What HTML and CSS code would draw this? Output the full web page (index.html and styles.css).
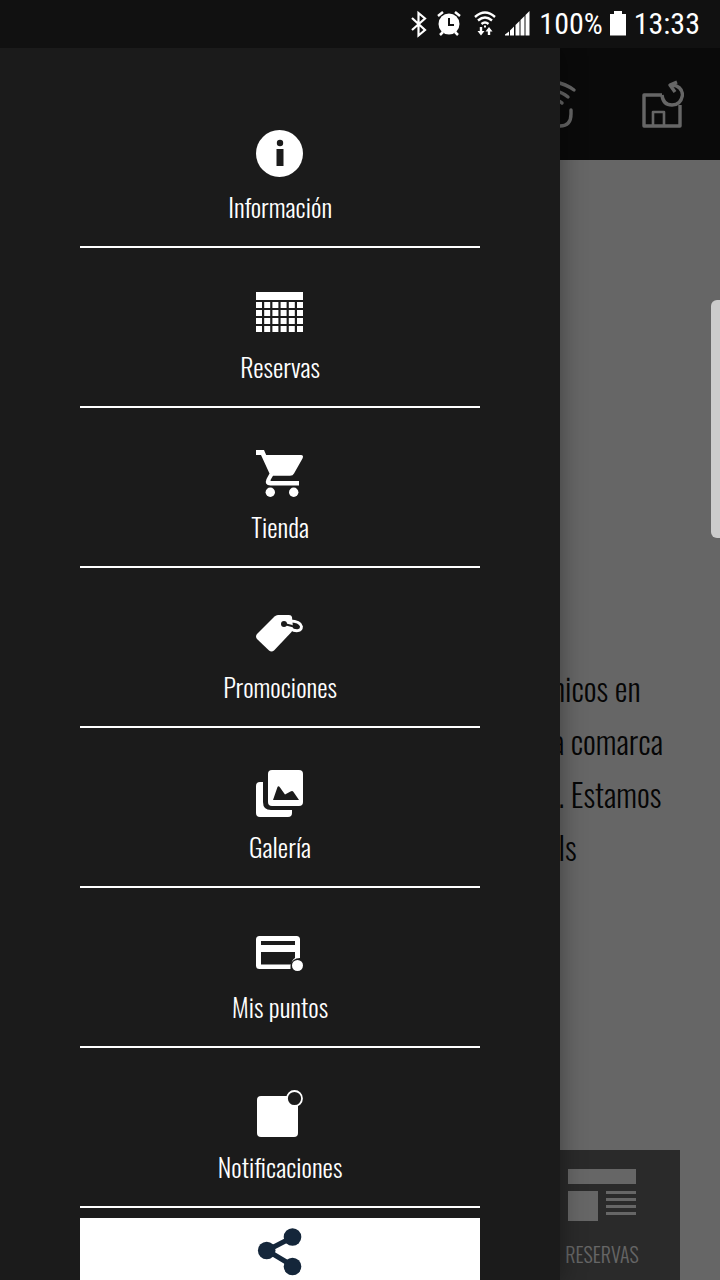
FILE: index.html
```html
<!DOCTYPE html>
<html lang="es">
<head>
  <meta charset="UTF-8">
  <meta name="viewport" content="width=device-width, initial-scale=1">
  <title>Menú</title>
  <link rel="stylesheet" href="styles.css">
</head>
<body>
  <div class="statusbar">
    <svg class="st-bt" width="18" height="28" viewBox="0 0 18 28" fill="none" stroke="#fff" stroke-width="2.200"><path d="M2 8l13 12-6.500 5.500V3l6.500 5.500L2 20"/></svg>
    <svg class="st-alarm" width="24" height="28" viewBox="0 0 24 28"><circle cx="12" cy="14" r="10.500" fill="#fff"/><path d="M1 6l5-4M23 6l-5-4M6 22l-3 3M18 22l3 3" stroke="#fff" stroke-width="2.500"/><path d="M12 8v7h5" fill="none" stroke="#111" stroke-width="2"/></svg>
    <svg class="st-wifi" width="22" height="28" viewBox="0 0 22 28" fill="none" stroke="#fff" stroke-width="2.400"><path d="M1 7q10-9 20 0M4 10.500q7-6 14 0M7.500 14q3.500-3 7 0"/><path d="M10 15.500h2v2h-2z" fill="#fff" stroke="none"/><path d="M7 17v6M15 25v-6" stroke-width="2.400"/><path d="M3.500 21h7L7 25.500zM11.500 21.500h7L15 17z" fill="#fff" stroke="none"/></svg>
    <svg class="st-signal" width="25" height="28" viewBox="0 0 25 28" fill="#fff"><path d="M0 25.500v-1l4-3v4zM5 25.500v-5l4-4v9zM10.500 25.500V15l4-4v14.500zM15.500 25.500V10l4-4v19.500zM20.500 25.500V5l4-4v24.500z"/></svg>
    <span class="st-text">100%</span>
    <svg class="st-battery" width="16" height="28" viewBox="0 0 16 28"><path d="M4 1h8v3h4v21.500H0V4h4z" fill="#fff"/></svg>
    <span class="st-text">13:33</span>
  </div>

  <div class="screen">
    <header class="topbar">
      <button class="icon-btn" aria-label="NFC">
        <svg width="48" height="48" viewBox="0 0 48 48" fill="none" stroke="#fff" stroke-width="3.400" stroke-linecap="round"><path d="M25 2q11 2 19 8M25 11q7 1 13 6M27 20q3 1 5 3M41 30v4q0 12-11 12H14"/></svg>
      </button>
      <button class="icon-btn" aria-label="Volver a la tienda">
        <svg width="42" height="48" viewBox="0 0 42 48" fill="none" stroke="#fff" stroke-width="3.400" stroke-linejoin="round"><path d="M20 15H2v31h36V25"/><path d="M11 46V32h11v14" stroke-width="2.600"/><path d="M20 15q1 10 10 10t10.500-10Q40 6 30 5"/><path d="M35 2l-7 3 5 7"/></svg>
      </button>
    </header>
    <main class="content">
      <p class="intro">nicos en<br>a comarca<br>&nbsp;. Estamos<br>&nbsp;ls</p>
      <a class="tile" href="#reservas">
        <svg width="68" height="52" viewBox="0 0 68 52" fill="#fff"><path d="M0 0h68v15H0zM0 22h30v30H0zM38 22h30v3H38zM38 29h30v3H38zM38 36h30v3H38zM38 43h30v3H38z"/></svg>
        <span>RESERVAS</span>
      </a>
    </main>
    <div class="scrim"></div>
    <div class="edge-handle"></div>

    <nav class="drawer">
      <a class="item" href="#informacion">
        <svg width="48" height="48" viewBox="0 0 48 48"><circle cx="23.500" cy="23.500" r="23.500" fill="#fff"/><circle cx="24" cy="13" r="3.200" fill="#1b1b1b"/><path d="M20.500 19h7v17h-7z" fill="#1b1b1b"/></svg>
        <span>Información</span>
      </a>
      <a class="item" href="#reservas">
        <svg width="48" height="48" viewBox="0 0 48 48" fill="#fff"><path d="M0 2h47v8H0z"/><path d="M0 15h47M0 23h47M0 31h47M0 39h47" stroke="#fff" stroke-width="6" stroke-dasharray="6 2.200"/></svg>
        <span>Reservas</span>
      </a>
      <a class="item" href="#tienda">
        <svg width="48" height="48" viewBox="0 0 48 48" fill="#fff"><path d="M0 0h8l2.200 5H45q3 0 1.500 3.500L38 23.500q-1 2.300-4 2.300H17l-2.500 4.200q-.3 1 .7 1H43v4.500H14.500q-6.500-.5-4-6.500l3-5.500L5 5H0z"/><circle cx="14.300" cy="42.300" r="4.700"/><circle cx="37.700" cy="42.300" r="4.700"/></svg>
        <span>Tienda</span>
      </a>
      <a class="item" href="#promociones">
        <svg width="48" height="48" viewBox="0 0 48 48"><path d="M18.500 6.500Q20 5 22 5h11q2.500 0 3 2l1 11q0 2-1.500 4L18 40.500q-2.500 2-5 0L1 29q-2-2.500 0-5z" fill="#fff"/><path d="M34 11q10 0 11.500 5.500c0 5-6 5.500-11 2" fill="none" stroke="#fff" stroke-width="2.800"/><path d="M28 14l8 2q3 2 6 2" fill="none" stroke="#1b1b1b" stroke-width="2"/><circle cx="28" cy="14" r="3" fill="#1b1b1b"/></svg>
        <span>Promociones</span>
      </a>
      <a class="item" href="#galeria">
        <svg width="48" height="48" viewBox="0 0 48 48"><path d="M4 12h3v20q0 8 8 8h21v3q0 4-4 4H4q-4 0-4-4V16q0-4 4-4z" fill="#fff"/><rect x="12" y="0" width="35" height="36" rx="4" fill="#fff"/><path d="M17 30l4.500-13q1-1.500 2.500.5l5 7 5.500-3q2-1 3 .5L43 30z" fill="#1b1b1b"/></svg>
        <span>Galería</span>
      </a>
      <a class="item" href="#puntos">
        <svg width="48" height="48" viewBox="0 0 48 48" fill="#fff"><path fill-rule="evenodd" d="M3.500 6h37q3.500 0 3.500 3.500V28q-8 0-9.500 7.500V39h-31Q0 39 0 35.500v-26Q0 6 3.500 6zM5 11v4h34v-4zM5 22v12.500h30q1-5 4-6.500v-6z"/><circle cx="41.500" cy="35.500" r="5.500"/></svg>
        <span>Mis puntos</span>
      </a>
      <a class="item" href="#notificaciones">
        <svg width="48" height="48" viewBox="0 0 48 48"><rect x="1" y="6" width="41" height="41" rx="4" fill="#fff"/><circle cx="38.500" cy="8.500" r="7.500" fill="#1b1b1b" stroke="#fff" stroke-width="1.800"/></svg>
        <span>Notificaciones</span>
      </a>
      <button class="share" aria-label="Compartir">
        <svg width="48" height="48" viewBox="0 0 48 48" fill="#14263a"><path d="M37 9L11 22.500 37 38" fill="none" stroke="#14263a" stroke-width="5"/><circle cx="36.500" cy="9" r="8.800"/><circle cx="10.700" cy="22.500" r="8.800"/><circle cx="36.500" cy="38.500" r="8.800"/></svg>
      </button>
    </nav>
  </div>
</body>
</html>
```
FILE: styles.css
```css
* { margin: 0; padding: 0; box-sizing: border-box; }
body {
  display: flex;
  flex-direction: column;
  height: 100vh;
  overflow: hidden;
  background: #fff;
  font-family: "Oswald", "Liberation Sans Narrow", "Roboto", sans-serif;
  font-weight: 300;
}
a { color: inherit; text-decoration: none; }
button { border: none; background: none; cursor: pointer; }
svg { display: block; flex: none; }

.statusbar {
  position: relative;
  z-index: 2;
  flex: none;
  display: flex;
  align-items: center;
  justify-content: flex-end;
  height: 48px;
  padding-right: 20px;
  background: #111;
  color: #fff;
  font-family: "Roboto Condensed", "Liberation Sans Narrow", "Roboto", sans-serif;
  font-weight: 400;
}
.st-bt { margin-right: 9px; }
.st-alarm { margin-right: 13px; }
.st-wifi { margin-right: 9px; }
.st-signal { margin-right: 9px; }
.st-battery { margin: 0 8px 0 7px; }
.st-text { font-size: 30px; line-height: 48px; }

.screen {
  position: relative;
  flex: 1;
  display: flex;
  flex-direction: column;
  min-height: 0;
}
.topbar {
  flex: none;
  display: flex;
  align-items: center;
  justify-content: flex-end;
  gap: 64px;
  height: 112px;
  padding-right: 36px;
  background: #1b1b1b;
}
.content {
  flex: 1;
  display: flex;
  flex-direction: column;
  justify-content: space-between;
  align-items: flex-end;
  padding: 501px 40px 0 0;
}
.intro {
  width: 128px;
  font-size: 32px;
  line-height: 53px;
  color: #111;
  white-space: nowrap;
}
.tile {
  display: flex;
  flex-direction: column;
  align-items: center;
  gap: 15px;
  width: 156px;
  height: 130px;
  padding-top: 19px;
  background: #696969;
  color: #fff;
  font-size: 20px;
  line-height: 36px;
}
.scrim {
  position: absolute;
  inset: 0;
  background: rgba(0, 0, 0, 0.6);
}
.edge-handle {
  position: absolute;
  top: 252px;
  right: 0;
  width: 9px;
  height: 238px;
  border-radius: 6px 0 0 6px;
  background: #ccc;
}

/* side menu */
.drawer {
  position: absolute;
  top: 0;
  bottom: 0;
  left: 0;
  width: 77.8%;
  padding: 40px 80px 0;
  overflow: hidden;
  background: #1b1b1b;
  color: #fff;
  box-shadow: 0 0 24px rgba(0, 0, 0, 0.4);
}
.item {
  display: flex;
  flex-direction: column;
  align-items: center;
  gap: 9px;
  height: 160px;
  padding-top: 42px;
  border-bottom: 2px solid #fff;
  font-size: 26px;
  line-height: 40px;
}
.share {
  display: flex;
  justify-content: center;
  width: 100%;
  height: 160px;
  margin-top: 10px;
  padding-top: 10px;
  background: #fff;
}
```
